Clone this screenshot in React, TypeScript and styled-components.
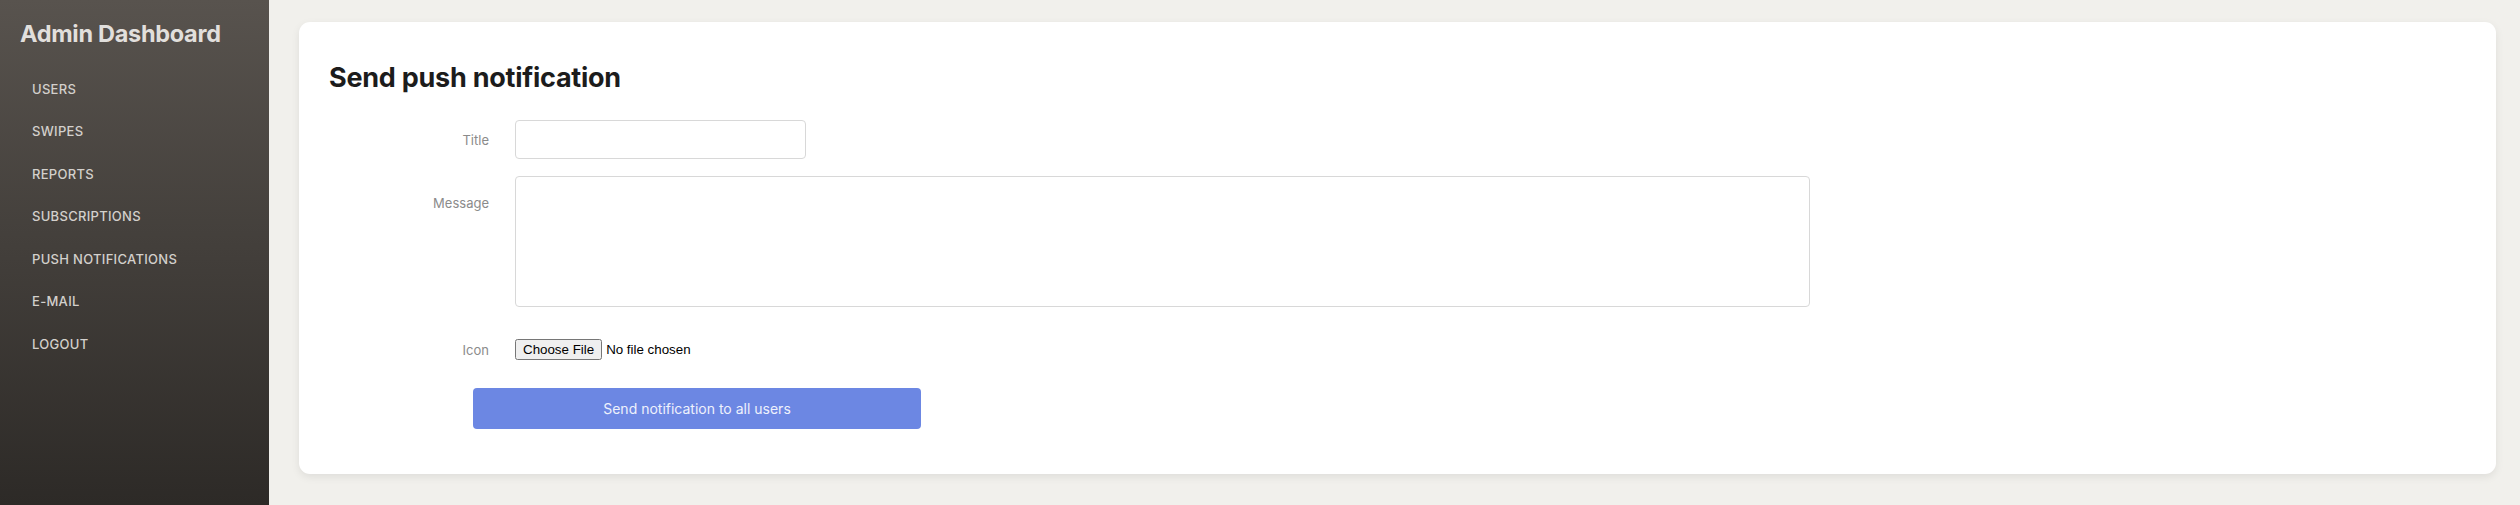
import styled, { createGlobalStyle } from 'styled-components'

const GlobalStyle = createGlobalStyle`
    * { box-sizing: border-box; }
    body {
        margin: 0;
        font-family: Inter, "Noto Sans", "Liberation Sans", sans-serif;
        background: #f1f0ec;
    }
`

const Layout = styled.div`
    display: flex;
    min-height: 505px;
`

const Sidebar = styled.aside`
    width: 269px;
    flex-shrink: 0;
    background: linear-gradient(180deg, #58534e 0%, #2d2a27 100%);
    padding: 20px 20px 0 20px;
`

const Brand = styled.h1`
    margin: 0 0 32.5px 0;
    font-size: 23.5px;
    font-weight: 700;
    line-height: 28px;
    color: #e1dfdc;
    letter-spacing: -0.3px;
`

const NavList = styled.ul`
    list-style: none;
    margin: 0;
    padding: 0 0 0 12px;
    display: flex;
    flex-direction: column;
    gap: 26.6px;
`

const NavItem = styled.li`
    font-size: 13px;
    line-height: 16px;
    font-weight: 500;
    color: #d3d0cc;
    letter-spacing: 0.3px;
    cursor: pointer;
`

const Main = styled.main`
    flex: 1;
    padding: 22px 24px 31px 30px;
`

const Card = styled.section`
    background: #fff;
    border-radius: 11px;
    box-shadow: 0 3px 8px rgba(0, 0, 0, 0.08);
    padding: 39px 30px 45px 30px;
`

const Heading = styled.h2`
    margin: 0 0 25px 0;
    font-size: 27px;
    line-height: 34px;
    font-weight: 700;
    color: #1c1c1c;
    letter-spacing: -0.25px;
`

const Row = styled.div<{ $top?: boolean; $mb: number }>`
    display: flex;
    align-items: ${p => (p.$top ? 'flex-start' : 'center')};
    gap: 26px;
    margin-bottom: ${p => p.$mb}px;
`

const Label = styled.label<{ $pt?: number }>`
    width: 160px;
    flex-shrink: 0;
    text-align: right;
    font-size: 13px;
    line-height: 16px;
    color: #8b8b8b;
    padding-top: ${p => p.$pt ?? 0}px;
`

const TextInput = styled.input`
    width: 291px;
    height: 39px;
    border: 1px solid #d8d8d8;
    border-radius: 4px;
    padding: 0 10px;
    font-family: inherit;
    font-size: 14px;
    outline: none;
`

const TextArea = styled.textarea`
    width: 1295px;
    height: 131px;
    border: 1px solid #d8d8d8;
    border-radius: 4px;
    padding: 8px 10px;
    font-family: inherit;
    font-size: 14px;
    resize: none;
    outline: none;
`

const FileInput = styled.input`
    font-family: "Liberation Sans", Arial, sans-serif;
    font-size: 13.333px;
    color: #000;
    height: 21px;
`

const SendButton = styled.button`
    margin-left: 144px;
    width: 448px;
    height: 41px;
    border: none;
    border-radius: 4px;
    background: #6c87e3;
    color: #eef1fc;
    font-family: inherit;
    font-size: 14px;
    cursor: pointer;
`

const navLinks = ['USERS', 'SWIPES', 'REPORTS', 'SUBSCRIPTIONS', 'PUSH NOTIFICATIONS', 'E-MAIL', 'LOGOUT']

export default function App() {
    return (
        <>
            <GlobalStyle />
            <Layout>
                <Sidebar>
                    <Brand>Admin Dashboard</Brand>
                    <NavList>
                        {navLinks.map(link => (
                            <NavItem key={link}>{link}</NavItem>
                        ))}
                    </NavList>
                </Sidebar>
                <Main>
                    <Card>
                        <Heading>Send push notification</Heading>
                        <Row $mb={17}>
                            <Label htmlFor="title">Title</Label>
                            <TextInput id="title" type="text" />
                        </Row>
                        <Row $top $mb={32}>
                            <Label htmlFor="message" $pt={19}>Message</Label>
                            <TextArea id="message" />
                        </Row>
                        <Row $mb={28}>
                            <Label htmlFor="icon">Icon</Label>
                            <FileInput id="icon" type="file" />
                        </Row>
                        <SendButton>Send notification to all users</SendButton>
                    </Card>
                </Main>
            </Layout>
        </>
    )
}
